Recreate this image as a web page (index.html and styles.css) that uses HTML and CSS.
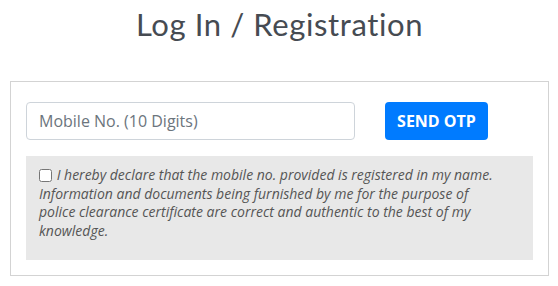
FILE: index.html
```html
<!DOCTYPE html>
<html lang="en">
<head>
<meta charset="utf-8">
<title>Log In / Registration</title>
<link rel="stylesheet" href="styles.css">
</head>
<body>
<main class="page">
  <h1 class="title">Log In / Registration</h1>
  <section class="card">
    <div class="row">
      <input class="mobile" type="text" placeholder="Mobile No. (10 Digits)">
      <button class="otp" type="button">SEND OTP</button>
    </div>
    <div class="declare">
      <label class="declare-text"><input class="check" type="checkbox"> I hereby declare that the mobile no. provided is registered in my name. Information and documents being furnished by me for the purpose of police clearance certificate are correct and authentic to the best of my knowledge.</label>
    </div>
  </section>
</main>
</body>
</html>
```
FILE: styles.css
```css
html, body {
  margin: 0;
  padding: 0;
  background: #fff;
}
.page {
  padding: 0 9px 0 10px;
  font-family: "Open Sans", "Liberation Sans", sans-serif;
}
.title {
  margin: 0;
  padding-top: 6px;
  height: 81px;
  box-sizing: border-box;
  text-align: center;
  font-family: "Lato", "Open Sans", sans-serif;
  font-weight: 400;
  font-size: 31px;
  line-height: 36px;
  color: #464b52;
  letter-spacing: 0.6px;
}
.card {
  border: 1px solid #d3d3d3;
  padding: 20px 15px 15px;
}
.row {
  display: flex;
  align-items: center;
  gap: 30px;
}
.mobile {
  width: 329px;
  height: 38px;
  box-sizing: border-box;
  border: 1px solid #ced4da;
  border-radius: 4px;
  padding: 0 12px;
  font-family: "Open Sans", sans-serif;
  font-size: 16px;
  color: #495057;
  outline: none;
}
.mobile::placeholder {
  color: #6c757d;
}
.otp {
  width: 103px;
  height: 38px;
  border: none;
  border-radius: 4px;
  background: #007bff;
  color: #fff;
  font-family: "Open Sans", sans-serif;
  font-weight: 700;
  font-size: 16px;
  padding: 0;
}
.declare {
  margin-top: 16px;
  background: #e8e8e8;
  padding: 10px 30px 20px 13px;
}
.declare-text {
  display: block;
  font-style: italic;
  font-size: 14px;
  line-height: 18.5px;
  color: #555;
}
.check {
  margin: 0 1px 0 0;
  width: 13px;
  height: 13px;
  vertical-align: -2px;
}
```
